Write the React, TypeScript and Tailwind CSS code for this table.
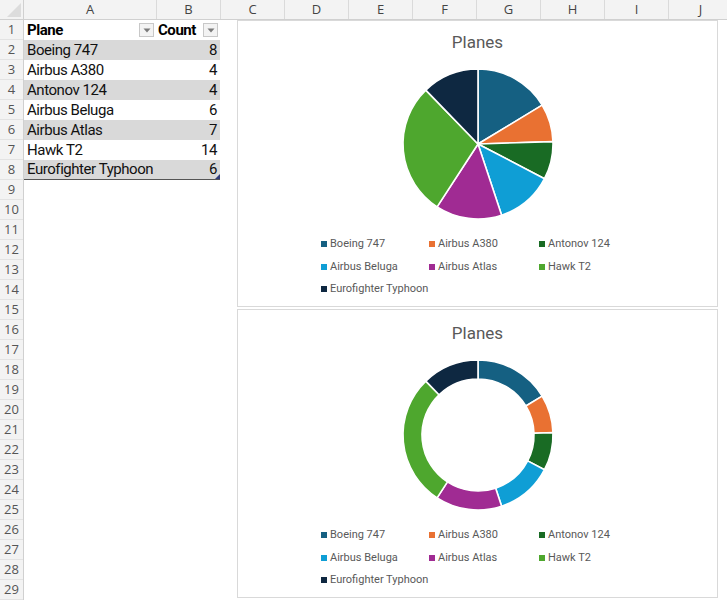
import React from "react";

type Plane = { name: string; count: number; color: string };

const planes: Plane[] = [
  { name: "Boeing 747", count: 8, color: "#156082" },
  { name: "Airbus A380", count: 4, color: "#e97132" },
  { name: "Antonov 124", count: 4, color: "#196b24" },
  { name: "Airbus Beluga", count: 6, color: "#0f9ed5" },
  { name: "Airbus Atlas", count: 7, color: "#a02b93" },
  { name: "Hawk T2", count: 14, color: "#4ea72e" },
  { name: "Eurofighter Typhoon", count: 6, color: "#0e2841" },
];

const otherCols = ["C", "D", "E", "F", "G", "H", "I", "J"];

// angle measured from 12 o'clock, clockwise
function pt(cx: number, cy: number, r: number, a: number) {
  return `${(cx + r * Math.sin(a)).toFixed(2)} ${(cy - r * Math.cos(a)).toFixed(2)}`;
}

function slicePath(cx: number, cy: number, r: number, ri: number, a0: number, a1: number) {
  const large = a1 - a0 > Math.PI ? 1 : 0;
  if (ri <= 0) {
    return `M ${cx} ${cy} L ${pt(cx, cy, r, a0)} A ${r} ${r} 0 ${large} 1 ${pt(cx, cy, r, a1)} Z`;
  }
  return `M ${pt(cx, cy, r, a0)} A ${r} ${r} 0 ${large} 1 ${pt(cx, cy, r, a1)} L ${pt(cx, cy, ri, a1)} A ${ri} ${ri} 0 ${large} 0 ${pt(cx, cy, ri, a0)} Z`;
}

function PieSvg({ inner }: { inner: number }) {
  const total = planes.reduce((s, p) => s + p.count, 0);
  let acc = 0;
  return (
    <svg width="160" height="160" viewBox="0 0 160 160">
      {planes.map((p) => {
        const a0 = (acc / total) * Math.PI * 2;
        acc += p.count;
        const a1 = (acc / total) * Math.PI * 2;
        return (
          <path
            key={p.name}
            d={slicePath(80, 80, 75, inner, a0, a1)}
            fill={p.color}
            stroke="#ffffff"
            strokeWidth="1.6"
            strokeLinejoin="round"
          />
        );
      })}
    </svg>
  );
}

function Chart({ inner, className }: { inner: number; className: string }) {
  return (
    <div className={`flex w-[481px] flex-col items-center border border-[#d9d9d9] bg-white ${className}`}>
      <div className="text-[17px] leading-[22px] text-[#595959]">Planes</div>
      <div className="mt-[11px]">
        <PieSvg inner={inner} />
      </div>
      <div className="mt-[9px] grid w-full grid-cols-[108px_110px_110px] pl-[83px] text-[11px] leading-[22.5px] text-[#595959]">
        {planes.map((p) => (
          <div key={p.name} className="flex items-center gap-[3px] whitespace-nowrap">
            <span className="h-[6px] w-[6px]" style={{ backgroundColor: p.color }} />
            <span>{p.name}</span>
          </div>
        ))}
      </div>
    </div>
  );
}

function FilterButton() {
  return (
    <span className="flex h-[14px] w-[15px] shrink-0 items-center justify-center border border-[#c8c8c8] bg-[#f3f3f3]">
      <svg width="8" height="5" viewBox="0 0 8 5">
        <path d="M0.5 0.5 L7.5 0.5 L4 4.5 Z" fill="#7a7a7a" />
      </svg>
    </span>
  );
}

export default function App() {
  const rows = Array.from({ length: 29 }, (_, i) => i + 1);
  return (
    <div className="h-[602px] w-[727px] overflow-hidden bg-white font-['Open_Sans',sans-serif]">
      {/* column headers */}
      <div className="flex h-[20px] border-b border-[#d0d0d0] bg-[#f3f3f3] text-[13px] leading-[19px] text-[#444]">
        <div className="flex w-[24px] shrink-0 items-end justify-end border-r border-[#d0d0d0] p-[2px]">
          <svg width="14" height="14" viewBox="0 0 14 14">
            <path d="M14 0 L14 14 L0 14 Z" fill="#dcdcdc" />
          </svg>
        </div>
        <div className="w-[133px] shrink-0 border-r border-[#dadada] text-center">A</div>
        <div className="w-[64px] shrink-0 border-r border-[#dadada] text-center">B</div>
        {otherCols.map((c) => (
          <div key={c} className="w-[64px] shrink-0 border-r border-[#dadada] text-center">
            {c}
          </div>
        ))}
      </div>

      <div className="flex">
        {/* row headers */}
        <div className="w-[24px] shrink-0 border-r border-[#d0d0d0] bg-[#f3f3f3] text-[13px] text-[#555]">
          {rows.map((r) => (
            <div key={r} className="flex h-[20px] items-center justify-center border-b border-[#e3e3e3] pt-px">
              {r}
            </div>
          ))}
        </div>

        {/* table */}
        <div className="w-[196px] shrink-0 whitespace-nowrap font-['Roboto',sans-serif] text-[15px] tracking-[-0.45px] text-[#111]">
          <div className="flex h-[20px] items-center font-bold text-black">
            <div className="flex w-[132px] items-center justify-between pl-[3px] pr-[2px]">
              <span>Plane</span>
              <FilterButton />
            </div>
            <div className="flex w-[64px] items-center justify-between pl-[2px] pr-[2px]">
              <span>Count</span>
              <FilterButton />
            </div>
          </div>
          {planes.map((p, i) => (
            <div
              key={p.name}
              className={`relative flex h-[20px] items-center ${i % 2 === 0 ? "bg-[#d9d9d9]" : "bg-white"} ${
                i === planes.length - 1 ? "border-b border-[#555]" : ""
              }`}
            >
              <div className="w-[132px] pl-[3px]">{p.name}</div>
              <div className="w-[64px] pr-[3px] text-right">{p.count}</div>
              {i === planes.length - 1 && (
                <svg className="absolute bottom-0 right-0" width="5" height="5" viewBox="0 0 5 5">
                  <path d="M5 0 L5 5 L0 5 Z" fill="#2f3b7a" />
                </svg>
              )}
            </div>
          ))}
        </div>

        {/* charts */}
        <div className="ml-[17px] flex shrink-0 flex-col gap-[2px] font-['Roboto',sans-serif]">
          <Chart inner={0} className="h-[287px] pt-[10px]" />
          <Chart inner={56} className="h-[289px] pt-[12px]" />
        </div>
      </div>
    </div>
  );
}
